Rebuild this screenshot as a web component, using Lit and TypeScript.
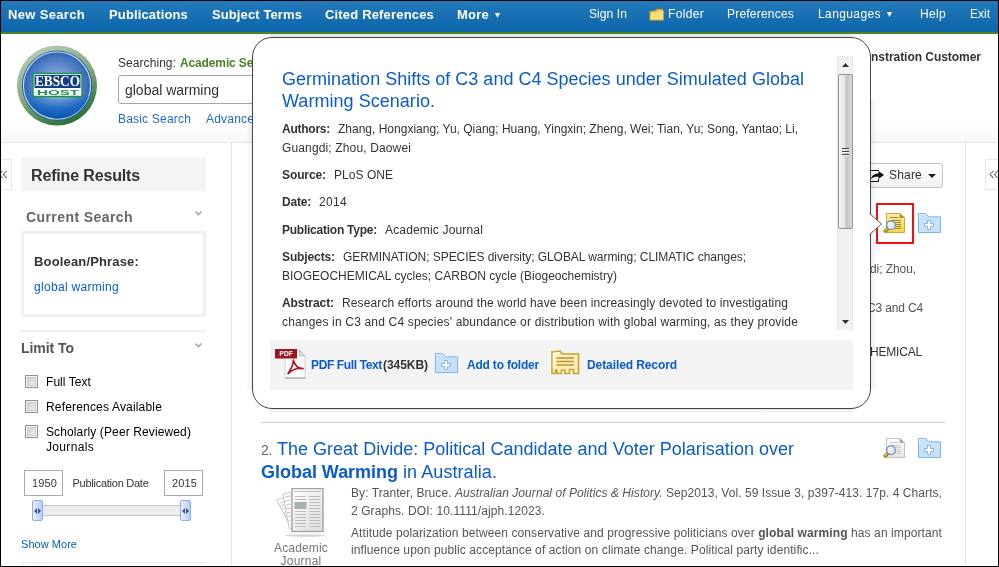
import { LitElement, html, css, svg } from "lit";
import { customElement, property } from "lit/decorators.js";

/** A single line of text tracked so that it fills `span` pixels. */
@customElement("text-run")
class TextRun extends LitElement {
  @property({ type: Number }) span = 0;
  static styles = css`
    :host { display: inline-block; white-space: pre; }
  `;
  render() {
    return html`<slot></slot>`;
  }
  firstUpdated() {
    const count = (this.textContent || "").length;
    if (!this.span || !count) return;
    const natural = this.getBoundingClientRect().width;
    this.style.letterSpacing = `${(this.span - natural) / count}px`;
  }
}

const run = (span: number, content: unknown, cls = "") =>
  html`<text-run class=${cls} .span=${span}>${content}</text-run>`;

const folderPlus = html`<svg class="i-folder" width="23" height="20" viewBox="0 0 23 20">
  <path d="M.5 19.5V.5H7.5L11 3.8H22.5V19.5Z" fill="#c9e2fb" stroke="#79b5f2"/>
  <path d="M1.5 5.5V1.5H7" fill="none" stroke="#e2f0fd"/>
  <path d="M9.5 7.5H12.5V10.5H15.5V13.5H12.5V16.5H9.5V13.5H6.5V10.5H9.5Z" fill="#fff" stroke="#86b4e4"/>
</svg>`;

const preview = (yellow: boolean) => html`<svg class="i-preview" width="22" height="20" viewBox="0 0 22 20">
  <defs>
    <linearGradient id=${yellow ? "page-y" : "page-g"} x1="0" y1="0" x2="0" y2="1">
      <stop offset="0" stop-color=${yellow ? "#f6ecb4" : "#fbfbfb"}/><stop offset="1" stop-color=${yellow ? "#f5d63f" : "#e6e6e6"}/>
    </linearGradient>
  </defs>
  <path d="M3.5 .5H17L21.5 5V19.5H3.5Z" fill=${yellow ? "url(#page-y)" : "url(#page-g)"} stroke=${yellow ? "#c9a93a" : "#c2c2c2"}/>
  <path d="M16.5 0V5H22Z" fill=${yellow ? "#b9962c" : "#a9a9a9"}/>
  <path d="M7 4.5H15M8 7.5H18M12 9.5H18M13 11.5H18M13 13.5H18M12 15.5H18" stroke=${yellow ? "#a8842a" : "#cdcdcd"}/>
  <path d="M2.2 18L4.8 15.4" stroke="#8a6a14" stroke-width="3.4" stroke-linecap="round"/>
  <path d="M2 17.8L4.4 15.4" stroke="#e2b93c" stroke-width="1.8" stroke-linecap="round"/>
  <circle cx="8" cy="12.2" r="4.3" fill="#dcebf9" stroke="#6d88b0" stroke-width="1.2"/>
  <circle cx="6.8" cy="11" r="1.8" fill="#fff"/>
</svg>`;

const collapse = html`<svg width="10" height="9" viewBox="0 0 10 9"><path d="M4.5 .8L1 4.4L4.5 8M8.8 .8L5.3 4.4L8.8 8" fill="none" stroke="#777" stroke-width="1.1"/></svg>`;
const chevron = html`<svg class="chev" width="7" height="5" viewBox="0 0 7 5"><path d="M.6 .6L3.5 3.5L6.4 .6" fill="none" stroke="#aaa" stroke-width="1.7"/></svg>`;
const caret = html`<svg class="caret" width="5" height="5" viewBox="0 0 5 5"><path d="M0 0H5L2.5 5Z" fill="#fff"/></svg>`;

const logo = html`<svg class="logo" width="80" height="81" viewBox="0 0 80 81">
  <defs>
    <linearGradient id="ring" x1=".25" y1="0" x2=".75" y2="1">
      <stop offset="0" stop-color="#b9ccb5"/><stop offset=".5" stop-color="#7fa67d"/><stop offset="1" stop-color="#1f6a2b"/>
    </linearGradient>
    <radialGradient id="disc" cx=".5" cy=".5" r=".52">
      <stop offset="0" stop-color="#a9bfe6"/><stop offset=".5" stop-color="#6f93d2"/><stop offset="1" stop-color="#2a62b4"/>
    </radialGradient>
    <radialGradient id="low" cx=".5" cy=".1" r=".9">
      <stop offset="0" stop-color="#8fb2e4" stop-opacity=".6"/><stop offset=".6" stop-color="#1565c0" stop-opacity=".75"/><stop offset="1" stop-color="#0a57b3"/>
    </radialGradient>
  </defs>
  <circle cx="40" cy="40.5" r="40" fill="url(#ring)"/>
  <circle cx="40" cy="40.5" r="35" fill="#0f4f9f"/>
  <circle cx="40" cy="40.5" r="33.6" fill="url(#disc)" stroke="#c0d4ee" stroke-width="1.2"/>
  <path d="M8 45C20 56 58 57 72 51A33 33 0 0 1 8 45Z" fill="url(#low)"/>
  <rect x="16" y="28.5" width="49" height="23" rx="1.5" fill="#fff" stroke="#189447" stroke-width="1.4"/>
  <rect x="17.5" y="30" width="46" height="13" fill="#123f86"/>
  <text x="18" y="41.4" textLength="45" lengthAdjust="spacingAndGlyphs" class="lg1">EBSCO</text>
  <text x="20" y="50" textLength="42" lengthAdjust="spacingAndGlyphs" class="lg2">HOST</text>
</svg>`;

const pdf = html`<svg width="31" height="30" viewBox="0 0 31 30">
  <path d="M10 .8H24.5L30 7V28.5H10Z" fill="#fdfdfd" stroke="#d0d0d0"/>
  <path d="M10 29.2H30.5" stroke="#b0b0b0" stroke-width="1.2"/>
  <path d="M24 1L24.5 7H30Z" fill="#ddd" stroke="#b5b5b5" stroke-width=".8"/>
  <rect x="0" y="0" width="22" height="9.5" fill="#9c1620"/>
  <text x="4.4" y="7.2" textLength="13.4" class="pdft">PDF</text>
  <path d="M13 24.5C15 21.5 18.5 16.5 18.4 11.2C20 16.5 23 20 28 19.6C24 18 17 20.5 13.2 24.6Z" fill="none" stroke="#b01522" stroke-width="1.7" stroke-linejoin="round"/>
</svg>`;

const record = html`<svg width="29" height="25" viewBox="0 0 29 25">
  <path d="M1 23.5V2L9 1L11 4H27.5V23.5H22.5V19.5H18.5V23.5H14V20H10.5V23.5H6V20H4.5V23.5Z" fill="#fbf0b0" stroke="#c6a23c" stroke-width="1.6"/>
  <path d="M2.5 18V3.5L8 2.7" fill="none" stroke="#fffce8" stroke-width="1.4"/>
  <path d="M5.5 8H23M5.5 11.5H23M5.5 15H23" stroke="#c48a4a" stroke-width="1.3"/>
</svg>`;

const rows = (x1: number, x2: number, from: number, to: number) => {
  const out = [];
  for (let y = from; y <= to; y += 3) out.push(svg`<path d="M${x1} ${y}.5H${x2}" stroke="#bcbcbc"/>`);
  return out;
};
const journal = html`<svg class="journal" width="50" height="49" viewBox="0 0 50 49">
  <defs><linearGradient id="jg" x1="0" y1="0" x2="1" y2="1"><stop offset="0" stop-color="#fff"/><stop offset="1" stop-color="#dcdcdc"/></linearGradient></defs>
  <ellipse cx="29" cy="47.5" rx="20" ry="1.3" fill="#d6d6d6"/>
  <path d="M.8 12L13 7L20 40L16 42Z" fill="#fafafa" stroke="#c8c8c8"/>
  <path d="M4 15L11 12M5 18L12 15M6 21L12 18.5M8 25L14 22M9 28L14 26M11 32L15 30" stroke="#ccc"/>
  <path d="M7 6L18 3.5V42L13 40Z" fill="#fafafa" stroke="#c8c8c8"/>
  <path d="M9 9L15 8M9 13L15 12M10 17L15 16M10 21L15 20M11 25L15 24M12 29L15 28M12 33L15 32" stroke="#ccc"/>
  <rect x="16" y=".5" width="31" height="43" fill="url(#jg)" stroke="#a3a3a3" stroke-width="1.4"/>
  ${rows(18, 45, 3, 5)}${rows(19, 30, 8, 11)}${rows(33, 44, 8, 38)}${rows(19, 30, 23, 38)}
  <rect x="18.5" y="14" width="12" height="7" fill="#a9b0b4"/>
</svg>`;

@customElement("app-root")
class AppRoot extends LitElement {
  static styles = css`
    :host { display: block; width: 999px; height: 567px; font: 12px/16px "Liberation Sans", Arial, sans-serif; color: #333; }
    *, *::after { box-sizing: border-box; }
    svg { display: block; flex: none; }
    text-run { display: block; width: fit-content; flex: none; }
    .frame { position: relative; width: 999px; height: 567px; overflow: hidden; border: 1px solid #000; background: #fff; }
    .top { height: 33px; display: flex; align-items: flex-start; padding: 5px 0 0 7px; border-bottom: 2px solid #4b8327; background: linear-gradient(#2379b9, #0d66ab); color: #fff; }
    .nav { display: flex; align-items: center; font-size: 13px; font-weight: bold; padding-top: 1px; }
    .w0 { width: 101px; } .w1 { width: 103px; } .w2 { width: 113px; } .w3 { width: 132px; } .w4 { width: 132px; }
    .tool { display: flex; align-items: center; }
    .t0 { width: 60px; } .t1 { width: 78px; } .t2 { width: 91px; } .t3 { width: 102px; } .t4 { width: 50px; }
    .tool svg.fold { margin: 1px 4px 0 0; }
    .caret { margin: 1px 0 0 6px; }
    .head { height: 108px; display: flex; padding-left: 16px; background: linear-gradient(#fff 85px, #f8f8f8); }
    .logo { margin-top: 11px; }
    .lg1 { font: bold 14px "Liberation Serif", serif; fill: #fff; }
    .lg2 { font: bold 8px "Liberation Sans", sans-serif; fill: #189447; }
    .pdft { font: bold 6.5px "Liberation Sans", sans-serif; fill: #fff; }
    .search { margin: 21px 0 0 21px; width: 500px; }
    .search .db { display: flex; gap: 4px; }
    .search b { color: #4b8327; }
    .field { margin-top: 4px; height: 29px; border: 1px solid #a6a6a6; border-radius: 3px; padding: 6px 0 0 6px; font-size: 14px; color: #333; }
    .links { display: flex; gap: 15px; margin-top: 7px; color: #1a6ad6; }
    .customer { margin: 15px 17px 0 auto; font-weight: bold; }
    .main { display: flex; height: 425px; border-top: 1px solid #e4e4e4; }
    .left { width: 231px; flex: none; display: flex; gap: 10px; border-right: 1px solid #e4e4e4; }
    .tab { width: 11px; height: 31px; margin-top: 16px; border: 1px solid #e8e8e8; border-left: 0; display: flex; align-items: center; flex: none; }
    .left .tab { margin-right: -1px; padding-left: 0; }
    .left .tab svg { margin-left: -3px; }
    .side { width: 185px; }
    .refine { margin-top: 15px; height: 33px; background: #f4f4f4; font-size: 16px; font-weight: bold; padding: 9px 0 0 10px; line-height: 18px; }
    .sec { display: flex; justify-content: space-between; font-size: 14px; font-weight: bold; padding-right: 4px; }
    .sec.cur { margin-top: 18px; padding-left: 5px; color: #666; }
    .sec.lim { margin-top: 8px; color: #555; }
    .chev { margin-top: 2px; }
    .lim .chev { margin-top: 3px; }
    .query { margin-top: 6px; height: 86px; border: 3px solid #f0f0f0; padding: 20px 0 0 10px; }
    .query b { font-size: 13px; }
    .query .term { margin-top: 9px; }
    .link, .term { color: #0a5cce; }
    .rule { height: 2px; background: #f0f0f0; margin-top: 13px; }
    .checks { margin: 18px 0 0 4px; display: grid; gap: 10px; color: #000; line-height: 15px; }
    .check { display: flex; gap: 8px; }
    .check text-run { position: relative; top: 1px; }
    .box { width: 13px; height: 13px; margin-top: 1px; border: 1px solid #8e8f8f; background: linear-gradient(135deg, #c3c8cf, #f6f6f6); box-shadow: inset 0 0 0 1px #f4f4f4, inset 0 0 0 2px #c8ccd2; flex: none; }
    .dates { margin: 16px 3px 0; height: 26px; display: flex; justify-content: space-between; align-items: center; font-size: 11px; }
    .dates > text-run { margin: -1px 6px 0 0; }
    .year { width: 39px; height: 26px; border: 1px solid #aaa; padding: 4px 0 0 7px; }
    .slider { margin: 4px 15px 0 11px; height: 21px; display: flex; align-items: center; }
    .handle { width: 11px; height: 21px; border: 1px solid #8fb0e0; border-radius: 2px; background: linear-gradient(90deg, #e8f0ff, #b5cdf8); display: grid; place-items: center; flex: none; }
    .track { flex: 1; height: 11px; border: 1px solid #c4c4c4; border-width: 1px 0; background: #ececec; }
    .more { margin-top: 15px; font-size: 11px; }
    .more + .rule { margin-top: 10px; }
    .mid { width: 733px; flex: none; padding: 20px 20px 0 29px; display: flex; flex-direction: column; color: #555; }
    .mid > * { flex: none; }
    .share { align-self: flex-end; margin-right: 2px; width: 84px; height: 25px; border: 1px solid #c2c2c2; border-radius: 3px; background: linear-gradient(#fff, #f1f1f1); display: flex; align-items: center; padding-left: 9px; color: #333; }
    .share text-run { margin: -1px 6px 0 5px; }
    .acts { display: flex; justify-content: flex-end; gap: 13px; padding-right: 4px; }
    .mid > .acts { margin-top: 25px; height: 20px; }
    .hot { position: relative; }
    .hot::after { content: ""; position: absolute; left: -7px; top: -10px; width: 38px; height: 41px; border: 2px solid #e11; }
    .tails { padding-left: 609px; margin-top: 28px; }
    .tails .b { margin: 23px 0 28px -3px; }
    .tails .c { color: #333; }
    .entry { margin-top: 62px; border-top: 1px solid #ccc; padding-top: 15px; }
    .etop { display: flex; justify-content: space-between; height: 44px; }
    .title { font-size: 18px; line-height: 22px; color: #0a5cce; }
    .first { display: flex; gap: 5px; }
    .num { font-size: 14px; color: #666; padding-top: 1px; }
    .ebody { display: flex; margin-top: 3px; }
    .media { width: 80px; margin-right: 10px; color: #777; line-height: 13px; display: flex; flex-direction: column; align-items: center; }
    .journal { margin: 3px 0 5px -1px; }
    .cite { margin-top: 2px; } .abs { margin-top: 6px; } .abs2 { margin-top: 1px; }
    .right { flex: 1; border-left: 1px solid #e4e4e4; display: flex; justify-content: flex-end; }
    .right .tab { width: 13px; border: 1px solid #e8e8e8; border-right: 0; padding-left: 3px; }

    .pop { position: absolute; left: 251px; top: 36px; width: 619px; height: 372px; border: 1px solid #444; border-radius: 20px; background: #fff; padding: 18px 17px 0 17px; }
    .glow { position: absolute; left: 245px; top: 99px; width: 631px; height: 290px; mix-blend-mode: multiply; background: linear-gradient(90deg, #fff, #ececec 7px, #ececec calc(100% - 7px), #fff); }
    .glow.v { left: 269px; top: 33px; width: 583px; height: 381px; background: linear-gradient(#e9e9e9, #e9e9e9 375px, #fff); }
    .tip { position: absolute; right: -13px; top: 174px; }
    .view { display: flex; justify-content: space-between; height: 274px; overflow: hidden; }
    .rec { padding: 12px 0 0 12px; }
    .f { display: flex; gap: 8px; }
    .f b { flex: none; }
    .bar { width: 16px; height: 274px; background: #f1f1f1; border: 1px solid #e6e6e6; border-width: 0 1px; display: flex; flex-direction: column; align-items: center; }
    .up { margin: 7px 0 7px; }
    .thumb { width: 15px; height: 155px; border: 1px solid #979797; border-radius: 2px; background: linear-gradient(90deg, #f5f5f5, #e4e4e6 45%, #c2c2c6 55%, #d8d8da); display: grid; place-items: center; flex: none; }
    .down { margin: 91px 0 0; }
    .foot { margin-top: 10px; height: 50px; background: #f3f3f3; display: flex; align-items: center; font-weight: bold; padding-left: 5px; }
    .foot text-run { color: #0a5cce; margin-left: 5px; }
    .foot .kb { color: #333; margin: 0 7px 0 1px; }
    .foot .add { margin: 0 12px 0 9px; }
    .foot .det { margin-left: 7px; }
    .foot svg { margin-top: -2px; }
    .foot svg.i-folder { margin-top: -5px; }
    .foot .add + svg { margin-top: -6px; }
    .g1 { margin-top: 9px; } .g2 { margin-top: 3px; } .g3 { margin-top: 11px; } .g4 { margin-top: 12px; } .g5 { margin-top: 11px; }
  `;

  render() {
    const field = (name: unknown, val: unknown, cls: string) => html`<div class="f ${cls}"><b>${name}</b>${val}</div>`;
    return html`<div class="frame">
      <div class="top">
        <div class="nav w0">${run(77, "New Search")}</div>
        <div class="nav w1">${run(79, "Publications")}</div>
        <div class="nav w2">${run(90, "Subject Terms")}</div>
        <div class="nav w3">${run(109, "Cited References")}</div>
        <div class="nav w4">${run(32, "More")}${caret}</div>
        <div class="tool t0">${run(38, "Sign In")}</div>
        <div class="tool t1"><svg class="fold" width="15" height="13" viewBox="0 0 15 13">
          <path d="M.5 12V3L6 2.5L8 .8L14 1V12Z" fill="#d9a520"/><path d="M1 12L2 4.5L7.5 3.8L9 2.5H14.5V12Z" fill="#fbe07a"/><path d="M1 12.3H14.5" stroke="#b88a14"/></svg>${run(36, "Folder")}</div>
        <div class="tool t2">${run(67, "Preferences")}</div>
        <div class="tool t3">${run(63, "Languages")}${caret}</div>
        <div class="tool t4">${run(26, "Help")}</div>
        <div class="tool">${run(20, "Exit")}</div>
      </div>
      <div class="head">
        ${logo}
        <div class="search">
          <div class="db">${run(58, "Searching:")}<b>${run(145, "Academic Search Premier")}</b></div>
          <div class="field">${run(94, "global warming")}</div>
          <div class="links">${run(73, "Basic Search")}${run(98, "Advanced Search")}</div>
        </div>
        <div class="customer">${run(110, "nstration Customer")}</div>
      </div>
      <div class="main">
        <div class="left">
          <div class="tab">${collapse}</div>
          <div class="side">
            <div class="refine">${run(109, "Refine Results")}</div>
            <div class="sec cur">${run(107, "Current Search")}${chevron}</div>
            <div class="query"><b>${run(105, "Boolean/Phrase:")}</b>${run(85, "global warming", "term")}</div>
            <div class="rule"></div>
            <div class="sec lim">${run(53, "Limit To")}${chevron}</div>
            <div class="checks">
              <div class="check"><span class="box"></span>${run(45, "Full Text")}</div>
              <div class="check"><span class="box"></span>${run(116, "References Available")}</div>
              <div class="check"><span class="box"></span><div>${run(145, "Scholarly (Peer Reviewed)")}${run(48, "Journals")}</div></div>
            </div>
            <div class="dates"><div class="year">${run(25, "1950")}</div>${run(76, "Publication Date")}<div class="year">${run(25, "2015")}</div></div>
            <div class="slider">${this.handle()}<div class="track"></div>${this.handle()}</div>
            ${run(56, "Show More", "link more")}
            <div class="rule"></div>
          </div>
        </div>
        <div class="mid">
          <div class="share"><svg width="15" height="12" viewBox="0 0 15 12"><path d="M10 .5H1.5V11.5H9.5V9" fill="none" stroke="#111"/><path d="M2 9C3 5 6 3.5 9.5 3.5V1L15 5L9.5 9V6.8C6.5 6.5 4 7 2 9Z" fill="#111"/></svg>${run(33, "Share")}<svg width="8" height="4" viewBox="0 0 8 4"><path d="M0 0H8L4 4Z" fill="#222"/></svg></div>
          <div class="acts"><div class="hot">${preview(true)}</div>${folderPlus}</div>
          <div class="tails">${run(46, "di; Zhou,")}${run(56, "C3 and C4", "b")}${run(52, "HEMICAL", "c")}</div>
          <div class="entry">
            <div class="etop">
              <div class="title">
                <div class="first">${run(11, "2.", "num")}${run(517, "The Great Divide: Political Candidate and Voter Polarisation over")}</div>
                <div class="first">${run(137, html`<b>Global Warming</b>`)}${run(94, "in Australia.")}</div>
              </div>
              <div class="acts">${preview(false)}${folderPlus}</div>
            </div>
            <div class="ebody">
              <div class="media">${journal}${run(54, "Academic")}${run(41, "Journal")}</div>
              <div>
                ${run(591, html`By: Tranter, Bruce. <i>Australian Journal of Politics &amp; History.</i> Sep2013, Vol. 59 Issue 3, p397-413. 17p. 4 Charts,`)}
                ${run(194, "2 Graphs. DOI: 10.1111/ajph.12023.", "cite")}
                ${run(591, html`Attitude polarization between conservative and progressive politicians over <b>global warming</b> has an important`, "abs")}
                ${run(468, "influence upon public acceptance of action on climate change. Political party identific...", "abs2")}
              </div>
            </div>
          </div>
        </div>
        <div class="right"><div class="tab">${collapse}</div></div>
      </div>
      <div class="glow"></div><div class="glow v"></div>
      <div class="pop">
        <div class="view">
          <div class="rec">
            ${run(522, "Germination Shifts of C3 and C4 Species under Simulated Global", "title")}
            ${run(153, "Warming Scenario.", "title")}
            ${field(run(48, "Authors:"), run(460, "Zhang, Hongxiang; Yu, Qiang; Huang, Yingxin; Zheng, Wei; Tian, Yu; Song, Yantao; Li,"), "g1")}
            ${run(129, "Guangdi; Zhou, Daowei", "g2")}
            ${field(run(44, "Source:"), run(59, "PLoS ONE"), "g3")}
            ${field(run(29, "Date:"), run(28, "2014"), "g3")}
            ${field(run(95, "Publication Type:"), run(98, "Academic Journal"), "g4")}
            ${field(run(53, "Subjects:"), run(403, "GERMINATION; SPECIES diversity; GLOBAL warming; CLIMATIC changes;"), "g5")}
            ${run(335, "BIOGEOCHEMICAL cycles; CARBON cycle (Biogeochemistry)", "g2")}
            ${field(run(52, "Abstract:"), run(446, "Research efforts around the world have been increasingly devoted to investigating"), "g3")}
            ${run(516, "changes in C3 and C4 species' abundance or distribution with global warming, as they provide", "g2")}
          </div>
          <div class="bar">
            <svg class="up" width="7" height="4" viewBox="0 0 7 4"><path d="M3.5 0L7 4H0Z" fill="#333"/></svg>
            <div class="thumb"><svg width="7" height="8" viewBox="0 0 7 8"><path d="M0 .5H7M0 3.5H7M0 6.5H7" stroke="#444"/><path d="M1 1.5H7M1 4.5H7M1 7.5H7" stroke="#f4f4f4"/></svg></div>
            <svg class="down" width="7" height="4" viewBox="0 0 7 4"><path d="M0 0H7L3.5 4Z" fill="#333"/></svg>
          </div>
        </div>
        <div class="foot">${pdf}${run(71, "PDF Full Text")}${run(45, "(345KB)", "kb")}${folderPlus}${run(72, "Add to folder", "add")}${record}${run(90, "Detailed Record", "det")}</div>
        <svg class="tip" width="14" height="24" viewBox="0 0 14 24"><path d="M0 1.5H1L12.5 12L1 22.5H0Z" fill="#fff"/><path d="M.5 1.5L12.5 12L.5 22.5" fill="none" stroke="#555"/></svg>
      </div>
    </div>`;
  }

  handle() {
    return html`<div class="handle"><svg width="7" height="6" viewBox="0 0 7 6"><path d="M3 0V6L0 3ZM4 0L7 3L4 6Z" fill="#3f5580"/></svg></div>`;
  }
}
